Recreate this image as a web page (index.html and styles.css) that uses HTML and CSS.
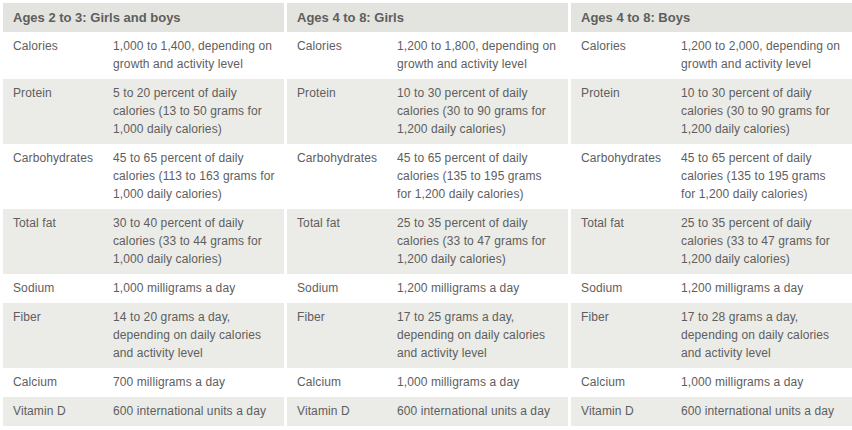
FILE: index.html
```html
<!DOCTYPE html>
<html>
<head>
<meta charset="utf-8">
<link rel="stylesheet" href="styles.css">
</head>
<body>
<div class="tables">
  <table class="nutri">
    <colgroup><col class="c-lbl"><col class="c-val"></colgroup>
    <thead><tr><th colspan="2">Ages 2 to 3: Girls and boys</th></tr></thead>
    <tbody>
      <tr><td class="lbl">Calories</td><td class="val">1,000 to 1,400, depending on growth and activity level</td></tr>
      <tr class="alt"><td class="lbl">Protein</td><td class="val">5 to 20 percent of daily calories (13 to 50 grams for 1,000 daily calories)</td></tr>
      <tr><td class="lbl">Carbohydrates</td><td class="val">45 to 65 percent of daily calories (113 to 163 grams for 1,000 daily calories)</td></tr>
      <tr class="alt"><td class="lbl">Total fat</td><td class="val">30 to 40 percent of daily calories (33 to 44 grams for 1,000 daily calories)</td></tr>
      <tr><td class="lbl">Sodium</td><td class="val">1,000 milligrams a day</td></tr>
      <tr class="alt"><td class="lbl">Fiber</td><td class="val">14 to 20 grams a day, depending on daily calories and activity level</td></tr>
      <tr><td class="lbl">Calcium</td><td class="val">700 milligrams a day</td></tr>
      <tr class="alt"><td class="lbl">Vitamin D</td><td class="val">600 international units a day</td></tr>
    </tbody>
  </table>
  <table class="nutri">
    <colgroup><col class="c-lbl"><col class="c-val"></colgroup>
    <thead><tr><th colspan="2">Ages 4 to 8: Girls</th></tr></thead>
    <tbody>
      <tr><td class="lbl">Calories</td><td class="val">1,200 to 1,800, depending on growth and activity level</td></tr>
      <tr class="alt"><td class="lbl">Protein</td><td class="val">10 to 30 percent of daily calories (30 to 90 grams for 1,200 daily calories)</td></tr>
      <tr><td class="lbl">Carbohydrates</td><td class="val">45 to 65 percent of daily calories (135 to 195 grams for 1,200 daily calories)</td></tr>
      <tr class="alt"><td class="lbl">Total fat</td><td class="val">25 to 35 percent of daily calories (33 to 47 grams for 1,200 daily calories)</td></tr>
      <tr><td class="lbl">Sodium</td><td class="val">1,200 milligrams a day</td></tr>
      <tr class="alt"><td class="lbl">Fiber</td><td class="val">17 to 25 grams a day, depending on daily calories and activity level</td></tr>
      <tr><td class="lbl">Calcium</td><td class="val">1,000 milligrams a day</td></tr>
      <tr class="alt"><td class="lbl">Vitamin D</td><td class="val">600 international units a day</td></tr>
    </tbody>
  </table>
  <table class="nutri">
    <colgroup><col class="c-lbl"><col class="c-val"></colgroup>
    <thead><tr><th colspan="2">Ages 4 to 8: Boys</th></tr></thead>
    <tbody>
      <tr><td class="lbl">Calories</td><td class="val">1,200 to 2,000, depending on growth and activity level</td></tr>
      <tr class="alt"><td class="lbl">Protein</td><td class="val">10 to 30 percent of daily calories (30 to 90 grams for 1,200 daily calories)</td></tr>
      <tr><td class="lbl">Carbohydrates</td><td class="val">45 to 65 percent of daily calories (135 to 195 grams for 1,200 daily calories)</td></tr>
      <tr class="alt"><td class="lbl">Total fat</td><td class="val">25 to 35 percent of daily calories (33 to 47 grams for 1,200 daily calories)</td></tr>
      <tr><td class="lbl">Sodium</td><td class="val">1,200 milligrams a day</td></tr>
      <tr class="alt"><td class="lbl">Fiber</td><td class="val">17 to 28 grams a day, depending on daily calories and activity level</td></tr>
      <tr><td class="lbl">Calcium</td><td class="val">1,000 milligrams a day</td></tr>
      <tr class="alt"><td class="lbl">Vitamin D</td><td class="val">600 international units a day</td></tr>
    </tbody>
  </table>
</div>
</body>
</html>
```
FILE: styles.css
```css
html, body {
  margin: 0;
  padding: 0;
  background: #ffffff;
}
body {
  font-family: "Liberation Sans", Helvetica, Arial, sans-serif;
  color: #5e5e5e;
  font-size: 12px;
}
.tables {
  display: flex;
  gap: 3px;
  padding: 3px 0 0 3px;
}
.nutri {
  width: 281px;
  flex: 0 0 281px;
  border-collapse: collapse;
  border-spacing: 0;
  table-layout: fixed;
}
.nutri .c-lbl {
  width: 110px;
}
.nutri .c-val {
  width: 171px;
}
.nutri th {
  background: #e3e3df;
  text-align: left;
  font-weight: bold;
  font-size: 13px;
  height: 29px;
  padding: 0 10px;
  line-height: 29px;
  color: #5e5e5e;
}
.nutri td {
  vertical-align: top;
  line-height: 18px;
  padding: 5px 0 6px 0;
  letter-spacing: 0.1px;
}
.nutri td.lbl {
  padding-left: 10px;
}
.nutri td.val {
  padding-right: 9px;
}
.nutri tr.alt td {
  background: #ebebe7;
}
```
